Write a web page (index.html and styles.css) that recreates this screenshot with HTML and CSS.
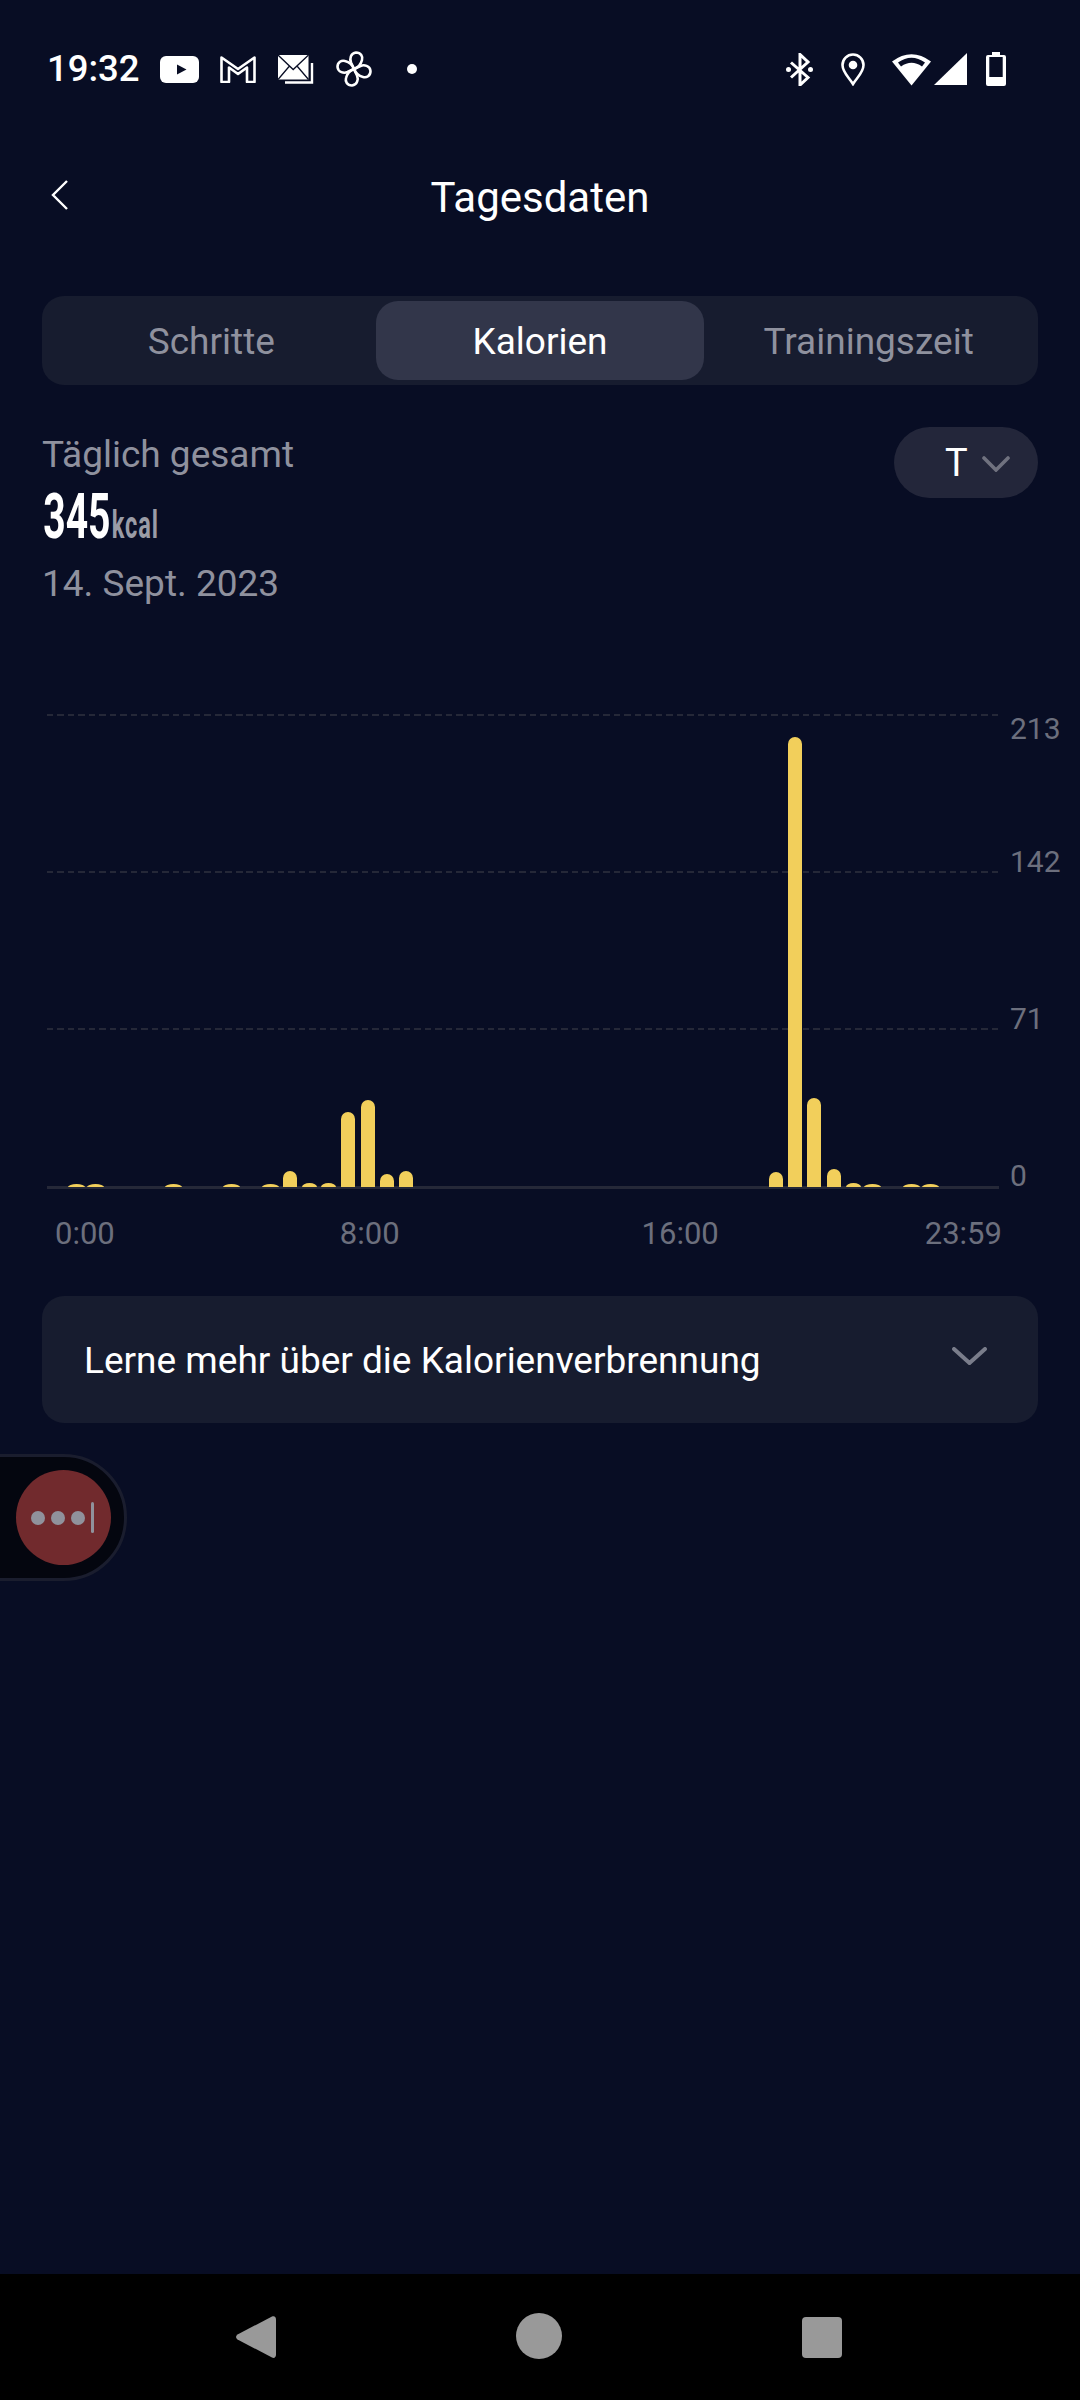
FILE: index.html
```html
<!DOCTYPE html>
<html lang="de">
<head>
<meta charset="utf-8">
<title>Tagesdaten</title>
<link rel="stylesheet" href="styles.css">
</head>
<body>
<div class="app">
  <div class="status">
    <div class="status-left">
      <span class="time">19:32</span>
      <svg class="i-yt" viewBox="0 0 39 27"><rect width="39" height="27" rx="6" fill="#fff"/><path d="M17 8.500v10l9.500-5z" fill="#080d24"/></svg>
      <svg class="i-gm" viewBox="0 0 36 28"><path d="M1.500 2.500L18 14 34.500 2.500V27H27V12.500L18 19 9 12.500V27H1.500z" fill="none" stroke="#fff" stroke-width="2.600" stroke-linejoin="round"/></svg>
      <svg class="i-mail" viewBox="0 0 36 29"><path d="M34 8v19.500H7" fill="none" stroke="#fff" stroke-width="2.400"/><rect width="30.500" height="24.500" fill="#fff"/><path d="M0 0l15.200 14.500L30.500 0M0 24.500l11.500-13.500M30.500 24.500L19 11" fill="none" stroke="#080d24" stroke-width="1.300"/></svg>
      <svg class="i-fan" viewBox="0 0 36 36"><g fill="none" stroke="#fff" stroke-width="2.600" stroke-linejoin="round"><path d="M18 18L15 11.500C13.500 8 14.500 2 20 1.500 25 1.500 27 5.500 26 9 25 13 22 16.500 18 18z"/><path transform="rotate(90 18 18)" d="M18 18L15 11.500C13.500 8 14.500 2 20 1.500 25 1.500 27 5.500 26 9 25 13 22 16.500 18 18z"/><path transform="rotate(180 18 18)" d="M18 18L15 11.500C13.500 8 14.500 2 20 1.500 25 1.500 27 5.500 26 9 25 13 22 16.500 18 18z"/><path transform="rotate(270 18 18)" d="M18 18L15 11.500C13.500 8 14.500 2 20 1.500 25 1.500 27 5.500 26 9 25 13 22 16.500 18 18z"/></g></svg>
      <span class="dot"></span>
    </div>
    <div class="status-right">
      <svg class="i-bt" viewBox="0 0 27 33"><path d="M5 9.500L22 24.500 14 32V1.500L22 9 5 24.500" fill="none" stroke="#fff" stroke-width="3"/><circle cx="2.500" cy="16.500" r="2.500" fill="#fff"/><circle cx="24.500" cy="16.500" r="2.500" fill="#fff"/></svg>
      <svg class="i-loc" viewBox="0 0 24 33"><path d="M12 31C8.500 25 1.500 19.500 1.500 12a10.500 10.500 0 0 1 21 0C22.500 19.500 15.500 25 12 31z" fill="none" stroke="#fff" stroke-width="2.600"/><circle cx="12" cy="12" r="4.300" fill="#fff"/></svg>
      <svg class="i-wifi" viewBox="0 0 39 33"><path d="M19.500 32.500L0 8.500Q19.500-6 39 8.500z" fill="#fff"/><path d="M6 9.500Q19.500 0 33 9.500L30 13.500Q19.500 6 9 13.500z" fill="#080d24"/></svg>
      <svg class="i-sig" viewBox="0 0 33 32"><path d="M0 32L33 0v32z" fill="#fff"/></svg>
      <svg class="i-bat" viewBox="0 0 20 34"><path d="M6 0h8v3h4a2 2 0 0 1 2 2v27a2 2 0 0 1-2 2H2a2 2 0 0 1-2-2V5a2 2 0 0 1 2-2h4z" fill="#fff"/><rect x="3.300" y="5" width="13.400" height="20" fill="#080d24"/></svg>
    </div>
  </div>

  <header class="header">
    <svg class="back" viewBox="0 0 17 30"><path d="M16 1L2 15l14 14" fill="none" stroke="#fff" stroke-width="2.400"/></svg>
    <h1 class="title">Tagesdaten</h1>
  </header>

  <nav class="tabs">
    <div class="tab">Schritte</div>
    <div class="tab tab-active">Kalorien</div>
    <div class="tab">Trainingszeit</div>
  </nav>

  <section class="summary">
    <div class="summary-text">
      <div class="muted">Täglich gesamt</div>
      <div class="total">345<span class="unit">kcal</span></div>
      <div class="muted date">14. Sept. 2023</div>
    </div>
    <div class="pill">
      <span class="pill-label">T</span>
      <svg class="pill-chev" viewBox="0 0 28 16"><path d="M2 2l12 12L26 2" fill="none" stroke="#70727f" stroke-width="3.600" stroke-linecap="round"/></svg>
    </div>
  </section>

  <section class="chart">
    <div class="chart-row">
      <div class="plot">
        <div class="grid">
          <div class="gridline"></div>
          <div class="gridline"></div>
          <div class="gridline"></div>
          <div class="baseline"></div>
        </div>
        <div class="bars">
          <i></i><i><b class="low"></b></i><i><b class="low"></b></i><i></i><i></i><i></i><i><b class="low"></b></i><i></i><i></i><i><b class="low"></b></i>
          <i></i><i><b class="low"></b></i><i><b style="height:16px"></b></i><i><b class="low mid"></b></i><i><b class="low mid"></b></i><i><b style="height:75px"></b></i><i><b style="height:87px"></b></i><i><b style="height:13px"></b></i><i><b style="height:16px"></b></i><i></i>
          <i></i><i></i><i></i><i></i><i></i><i></i><i></i><i></i><i></i><i></i>
          <i></i><i></i><i></i><i></i><i></i><i></i><i></i><i><b style="height:15px"></b></i><i><b style="height:450px"></b></i><i><b style="height:89px"></b></i>
          <i><b style="height:18px"></b></i><i><b class="low mid"></b></i><i><b class="low"></b></i><i></i><i><b class="low"></b></i><i><b class="low"></b></i><i></i><i></i><i></i>
        </div>
      </div>
      <div class="y-axis">
        <span class="y-top">213</span>
        <span class="y-next">142</span>
        <span class="y-step">71</span>
        <span class="y-step">0</span>
      </div>
    </div>
    <div class="x-axis">
      <span>0:00</span>
      <span class="x-8">8:00</span>
      <span class="x-16">16:00</span>
      <span class="x-end">23:59</span>
    </div>
  </section>

  <section class="learn">
    <span class="learn-text">Lerne mehr über die Kalorienverbrennung</span>
    <svg class="learn-chev" viewBox="0 0 35 18"><path d="M2 2l15.500 14L33 2" fill="none" stroke="#7a7d8b" stroke-width="4" stroke-linecap="round"/></svg>
  </section>

  <div class="float">
    <div class="float-btn">
      <span class="fd"></span><span class="fd"></span><span class="fd"></span><span class="fbar"></span>
    </div>
  </div>

  <footer class="navbar">
    <svg class="nav-back" viewBox="0 0 40 44"><path d="M36 1.500c2 -1 4 0 4 3v35c0 3 -2 4 -4 3L1.500 24.500c-2-1.500-2-3.500 0-5z" fill="#999"/></svg>
    <span class="nav-home"></span>
    <span class="nav-recent"></span>
  </footer>
</div>
</body>
</html>
```

FILE: styles.css
```css
* { box-sizing: border-box; }
html, body { margin: 0; padding: 0; }
body { background: #080d24; font-family: Roboto, "Noto Sans", sans-serif; color: #fff; }
.app { position: relative; width: 1080px; height: 2400px; display: flex; flex-direction: column; overflow: hidden; background: #080d24; }

/* status bar */
.status { height: 136px; display: flex; justify-content: space-between; align-items: flex-start; padding: 51px 74px 0 47px; }
.status svg { display: block; flex: none; }
.status-left, .status-right { display: flex; align-items: center; height: 36px; }
.time { font-size: 36.500px; font-weight: 500; line-height: 36px; width: 113px; }
.i-yt { width: 39px; height: 27px; }
.i-gm { width: 36px; height: 28px; margin-left: 21px; }
.i-mail { width: 36px; height: 29px; margin-left: 22px; }
.i-fan { width: 36px; height: 36px; margin-left: 22px; }
.dot { width: 10px; height: 10px; border-radius: 50%; background: #fff; margin-left: 35px; }
.i-bt { width: 27px; height: 33px; }
.i-loc { width: 24px; height: 33px; margin-left: 28px; }
.i-wifi { width: 39px; height: 33px; margin-left: 27px; }
.i-sig { width: 33px; height: 32px; margin-left: 3px; }
.i-bat { width: 20px; height: 34px; margin-left: 19px; }

/* header */
.header { height: 120px; position: relative; display: flex; align-items: center; justify-content: center; }
.back { position: absolute; left: 51px; top: 44px; width: 17px; height: 30px; }
.title { margin: 4px 0 0; font-size: 42px; font-weight: 400; line-height: 48px; }

/* tabs */
.tabs { margin: 40px 42px 0; height: 89px; padding: 5px; display: grid; grid-template-columns: 1fr 1fr 1fr; background: #171c2f; border-radius: 22px; }
.tab { display: flex; align-items: center; justify-content: center; border-radius: 22px; font-size: 37px; padding-top: 2px; color: #8f919e; }
.tab-active { background: #32364a; color: #fff; }

/* summary */
.summary { display: flex; justify-content: space-between; align-items: flex-start; margin: 42px 42px 0; }
.summary-text { margin-top: 6px; }
.muted { font-size: 37px; line-height: 44px; color: #8f919e; }
.total { font-size: 63px; font-weight: 700; line-height: 64px; margin-top: 8px; padding-left: 2px; transform: scaleX(.62); transform-origin: left center; white-space: nowrap; }
.unit { font-size: 38px; line-height: 1; letter-spacing: 1.500px; color: #9a9ca6; margin-left: 2px; }
.date { margin-top: 13px; }
.pill { width: 144px; height: 71px; border-radius: 36px; background: #23263a; display: flex; align-items: center; padding-left: 51px; }
.pill-label { font-size: 38px; line-height: 44px; }
.pill-chev { width: 28px; height: 16px; margin-left: 14px; margin-top: 3px; }

/* chart */
.chart-row { display: flex; margin-top: 108px; padding-left: 47px; }
.plot { position: relative; width: 952px; height: 473px; flex: none; }
.grid { position: absolute; inset: 0; display: flex; flex-direction: column; }
.gridline { height: 157px; background: repeating-linear-gradient(90deg, #252838 0 6.500px, transparent 6.500px 10.500px) top left / 100% 2px no-repeat; }
.baseline { height: 3px; background: #252838; position: absolute; left: 0; right: 0; bottom: -2px; }
.bars { position: absolute; inset: 0; display: grid; grid-template-columns: repeat(49, 1fr); align-items: end; }
.bars i { display: flex; justify-content: center; align-items: flex-end; height: 100%; }
.bars b { display: block; width: 14px; flex: none; background: #f2cf5b; border-radius: 7px 7px 0 0; }
.bars b.low { width: 17px; height: 3px; border-radius: 50% 50% 0 0 / 100% 100% 0 0; }
.bars b.mid { width: 15px; height: 4px; }
.y-axis { display: flex; flex-direction: column; margin-left: 11px; font-size: 30px; line-height: 36px; color: #6c6f7d; flex: none; }
.y-top { margin-top: -3px; }
.y-next { margin-top: 97px; }
.y-step { margin-top: 121px; }

.x-axis { display: flex; padding-left: 55px; height: 36px; margin-top: 22px; font-size: 31px; line-height: 36px; color: #6c6f7d; }
.x-8 { margin-left: 225px; }
.x-16 { margin-left: 242px; }
.x-end { margin-left: 206px; }

/* learn more */
.learn { margin: 44px 42px 0; height: 127px; border-radius: 22px; background: #171c2f; display: flex; align-items: center; justify-content: space-between; padding: 0 51px 0 42px; }
.learn-text { font-size: 37px; margin-top: 2px; }
.learn-chev { width: 35px; height: 18px; margin-top: -7px; }

/* floating button */
.float { position: absolute; left: -100px; top: 1454px; width: 227px; height: 127px; border-radius: 64px; background: #04060f; border: 3px solid #1a1d2e; }
.float-btn { position: absolute; left: 113px; top: 13px; width: 95px; height: 95px; border-radius: 50%; background: #712a2d; display: flex; align-items: center; padding-left: 15px; }
.fd { width: 14px; height: 14px; border-radius: 50%; background: #90929c; margin-right: 6px; }
.fbar { width: 3px; height: 31px; background: #90929c; border-radius: 2px; }

/* navigation bar */
.navbar { position: absolute; left: 0; right: 0; bottom: 0; height: 126px; background: #000; }
.nav-back { position: absolute; left: 236px; top: 41px; width: 40px; height: 44px; }
.nav-home { position: absolute; left: 516px; top: 39px; width: 46px; height: 46px; border-radius: 50%; background: #999; }
.nav-recent { position: absolute; left: 802px; top: 43px; width: 40px; height: 41px; border-radius: 4px; background: #999; }
```
